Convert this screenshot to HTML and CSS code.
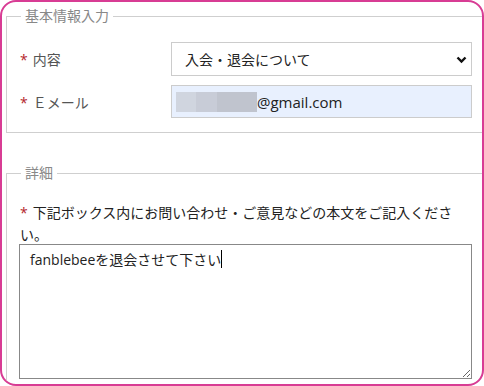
FILE: index.html
```html
<!DOCTYPE html>
<html lang="ja">
<head>
    <meta charset="UTF-8">
    <meta name="viewport" content="width=device-width, initial-scale=1.0">
    <title>お問い合わせ</title>
    <link rel="stylesheet" href="styles.css">
</head>
<body>

<form class="frame">
    <fieldset class="group basic">
        <legend>基本情報入力</legend>
        <div class="rows">
            <label class="label"><span class="req">*</span>内容</label>
            <div class="select-wrap">
                <select class="field select">
                    <option>入会・退会について</option>
                </select>
                <svg class="chevron" width="11" height="8" viewBox="0 0 11 8">
                    <polyline points="1.5,1.5 5.5,5.5 9.5,1.5" fill="none" stroke="#111" stroke-width="2.4"/>
                </svg>
            </div>

            <label class="label"><span class="req">*</span>Ｅメール</label>
            <div class="field email">
                <!-- blurred part of the address -->
                <span class="blur b1"></span><span class="blur b2"></span><span class="blur b3"></span>@gmail.com
            </div>
        </div>
    </fieldset>

    <fieldset class="group detail">
        <legend>詳細</legend>
        <p class="note"><span class="req">*</span>下記ボックス内にお問い合わせ・ご意見などの本文をご記入ください。</p>
        <div class="text-wrap">
            <textarea class="body-text">fanblebeeを退会させて下さい</textarea>
            <span class="caret"></span>
        </div>
    </fieldset>
</form>

</body>
</html>
```

FILE: styles.css
```css
html, body {
    margin: 0;
    padding: 0;
    background: #fff;
}

body {
    font-family: "Open Sans", "Noto Sans CJK JP", sans-serif;
    font-size: 14px;
    color: #222;
}

.frame {
    width: 484px;
    height: 386px;
    box-sizing: border-box;
    border: 2px solid #d83c94;
    border-radius: 16px;
    overflow: hidden;
    padding: 4px 0 0 4px;
    margin: 0;
}

.group {
    margin: 0 -20px 0 0;
    border: 1px solid #cfcfcf;
    padding: 16px 20px 14px 13px;
    min-width: 0;
}

.group legend {
    padding: 0 4px;
    margin-left: 1px;
    color: #888;
    font-size: 14px;
    line-height: 20px;
}

.rows {
    display: grid;
    grid-template-columns: 151px 301px;
    row-gap: 9px;
    align-items: center;
}

.label {
    color: #555;
    font-size: 14px;
}

.req {
    margin-right: 5px;
    color: #b3262b;
}

.field {
    box-sizing: border-box;
    width: 301px;
    border: 1px solid #cccccc;
    border-radius: 0;
    font-family: inherit;
}

.select-wrap {
    position: relative;
}

.select {
    appearance: none;
    -webkit-appearance: none;
    height: 34px;
    background: #fff;
    color: #222;
    font-size: 14px;
    padding: 0 0 0 13px;
}

.chevron {
    position: absolute;
    right: 5px;
    top: 14px;
}

.email {
    height: 33px;
    background: #e8f0fe;
    font-size: 15px;
    color: #222;
    display: flex;
    align-items: center;
    padding-left: 4px;
}

.blur {
    display: inline-block;
    height: 20px;
}

.b1 { width: 20px; background: #d0d5df; }
.b2 { width: 21px; background: #c8ccd7; }
.b3 { width: 40px; background: #c0c4ce; }

.detail {
    margin-top: 30px;
    padding: 19px 20px 20px 13px;
}

.note {
    margin: 0 12px 0 0;
    line-height: 22px;
    font-size: 14px;
}

.text-wrap {
    position: relative;
    width: 453px;
    margin: -2px 0 0 -1px;
}

.body-text {
    display: block;
    box-sizing: border-box;
    width: 453px;
    height: 135px;
    margin: 0;
    border: 1px solid #888;
    padding: 5px 10px;
    font-family: inherit;
    font-size: 14px;
    line-height: 20px;
    color: #222;
    resize: both;
}

.caret {
    position: absolute;
    left: 202px;
    top: 6px;
    width: 1px;
    height: 18px;
    background: #000;
}
```
